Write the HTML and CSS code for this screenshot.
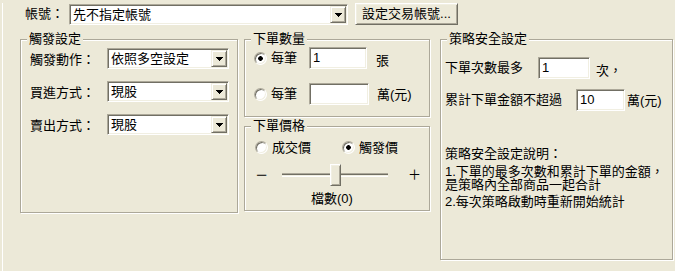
FILE: index.html
```html
<!DOCTYPE html>
<html lang="zh-Hant">
<head>
  <meta charset="UTF-8">
  <meta name="viewport" content="width=device-width, initial-scale=1.0">
  <title>策略設定</title>
  <link rel="stylesheet" href="styles.css">
</head>

<body>
  <div class="dialog">
    <div class="account-row">
      <span class="account-label">帳號：</span>
      <div class="combo combo-account">
        <span class="combo-text">先不指定帳號</span>
        <span class="combo-btn"><svg width="7" height="4" viewBox="0 0 7 4" shape-rendering="crispEdges"><path d="M0 0h7v1h-1v1h-1v1h-1v1h-1v-1h-1v-1h-1v-1h-1z" fill="#000"/></svg></span>
      </div>
      <button class="btn account-btn">設定交易帳號...</button>
    </div>

    <div class="panels">
      <div class="group group-trigger">
        <div class="group-title">觸發設定</div>
        <div class="trigger-body">
          <div class="field-row">
            <span class="field-label">觸發動作：</span>
            <div class="combo combo-field">
              <span class="combo-text">依照多空設定</span>
              <span class="combo-btn"><svg width="7" height="4" viewBox="0 0 7 4" shape-rendering="crispEdges"><path d="M0 0h7v1h-1v1h-1v1h-1v1h-1v-1h-1v-1h-1v-1h-1z" fill="#000"/></svg></span>
            </div>
          </div>
          <div class="field-row">
            <span class="field-label">買進方式：</span>
            <div class="combo combo-field">
              <span class="combo-text">現股</span>
              <span class="combo-btn"><svg width="7" height="4" viewBox="0 0 7 4" shape-rendering="crispEdges"><path d="M0 0h7v1h-1v1h-1v1h-1v1h-1v-1h-1v-1h-1v-1h-1z" fill="#000"/></svg></span>
            </div>
          </div>
          <div class="field-row">
            <span class="field-label">賣出方式：</span>
            <div class="combo combo-field">
              <span class="combo-text">現股</span>
              <span class="combo-btn"><svg width="7" height="4" viewBox="0 0 7 4" shape-rendering="crispEdges"><path d="M0 0h7v1h-1v1h-1v1h-1v1h-1v-1h-1v-1h-1v-1h-1z" fill="#000"/></svg></span>
            </div>
          </div>
        </div>
      </div>

      <div class="middle-col">
        <div class="group group-qty">
          <div class="group-title">下單數量</div>
          <div class="qty-body">
            <div class="qty-row">
              <span class="radio checked"></span>
              <span class="qty-label">每筆</span>
              <input class="textbox qty-lots" type="text" value="1">
              <span class="unit unit-lots">張</span>
            </div>
            <div class="qty-row">
              <span class="radio"></span>
              <span class="qty-label">每筆</span>
              <input class="textbox qty-amount" type="text" value="">
              <span class="unit unit-amount">萬(元)</span>
            </div>
          </div>
        </div>

        <div class="group group-price">
          <div class="group-title">下單價格</div>
          <div class="price-body">
            <div class="price-options">
              <label class="price-option"><span class="radio"></span>成交價</label>
              <label class="price-option"><span class="radio checked"></span>觸發價</label>
            </div>
            <div class="slider-row">
              <span class="slider-sign">─</span>
              <div class="slider-track"><span class="slider-thumb"></span></div>
              <span class="slider-sign slider-plus">＋</span>
            </div>
            <div class="slider-caption">檔數(0)</div>
          </div>
        </div>
      </div>

      <div class="group group-safety">
        <div class="group-title">策略安全設定</div>
        <div class="safety-body">
          <div class="safety-row">
            <span class="safety-label">下單次數最多</span>
            <input class="textbox max-count" type="text" value="1">
            <span class="unit unit-count">次，</span>
          </div>
          <div class="safety-row">
            <span class="safety-label safety-label-wide">累計下單金額不超過</span>
            <input class="textbox max-amount" type="text" value="10">
            <span class="unit unit-max">萬(元)</span>
          </div>
          <p class="notes-title">策略安全設定說明：</p>
          <p class="note">1.下單的最多次數和累計下單的金額，<br>是策略內全部商品一起合計</p>
          <p class="note note-last">2.每次策略啟動時重新開始統計</p>
        </div>
      </div>
    </div>
  </div>
</body>
</html>
```

FILE: styles.css
```css
:root {
  --face: #ece9d8;
  --light: #f1efe2;
  --highlight: #ffffff;
  --shadow: #aca899;
  --dark-shadow: #716f64;
}

* {
  margin: 0;
  padding: 0;
  box-sizing: border-box;
}

body {
  width: 675px;
  height: 271px;
  overflow: hidden;
  background-color: var(--face);
  color: #000;
  font-family: "Liberation Sans", "Noto Sans CJK TC", sans-serif;
  font-size: 13px;
  line-height: 14px;
}

.dialog {
  height: 271px;
  margin-left: 2px;
  border-left: 1px solid var(--highlight);
}

/* top account row */
.account-row {
  display: flex;
  align-items: center;
  height: 22px;
  margin-top: 3px;
  padding-left: 22px;
}

.account-label {
  width: 44px;
}

.combo {
  display: flex;
  align-items: center;
  height: 21px;
  padding: 1px;
  background: #fff;
  border: 1px solid;
  border-color: var(--shadow) var(--highlight) var(--highlight) var(--shadow);
  box-shadow: inset 1px 1px 0 var(--dark-shadow), inset -1px -1px 0 var(--light);
}

.combo-account {
  width: 279px;
  align-self: flex-end;
}

.combo-text {
  flex: 1;
  padding-left: 2px;
  white-space: nowrap;
}

.combo-btn {
  display: flex;
  align-items: center;
  justify-content: center;
  width: 16px;
  height: 17px;
  background: var(--face);
  border: 1px solid;
  border-color: var(--light) var(--dark-shadow) var(--dark-shadow) var(--light);
  box-shadow: inset 1px 1px 0 var(--highlight), inset -1px -1px 0 var(--shadow);
}

.btn {
  height: 22px;
  background: var(--face);
  color: #000;
  font: inherit;
  border: 1px solid;
  border-color: var(--highlight) var(--dark-shadow) var(--dark-shadow) var(--highlight);
  box-shadow: inset 1px 1px 0 var(--light), inset -1px -1px 0 var(--shadow);
}

.account-btn {
  width: 103px;
  margin-left: 7px;
}

/* group boxes */
.panels {
  display: flex;
  align-items: flex-start;
  margin-top: 14px;
  padding-left: 17px;
}

.group {
  border: 1px solid var(--shadow);
  box-shadow: inset 1px 1px 0 var(--highlight), 1px 1px 0 var(--highlight);
}

.group-title {
  width: max-content;
  margin: -8px 0 0 6px;
  padding: 0 2px;
  background: var(--face);
  line-height: 14px;
}

.group-trigger {
  width: 218px;
  height: 174px;
  margin-right: 6px;
}

.trigger-body {
  display: flex;
  flex-direction: column;
  gap: 12px;
  padding: 2px 0 0 9px;
}

.field-row {
  display: flex;
  align-items: center;
  height: 21px;
}

.field-label {
  width: 77px;
  padding-top: 3px;
}

.combo-field {
  width: 122px;
}

.middle-col {
  display: flex;
  flex-direction: column;
  gap: 9px;
  width: 186px;
  margin-right: 10px;
}

.group-qty {
  height: 78px;
}

.qty-body {
  display: flex;
  flex-direction: column;
  gap: 14px;
  padding: 1px 0 0 9px;
}

.qty-row {
  display: flex;
  align-items: center;
  height: 22px;
}

.radio {
  flex: none;
  width: 13px;
  height: 13px;
  margin-right: 4px;
  border-radius: 50%;
  border: 1px solid;
  border-color: var(--shadow) var(--highlight) var(--highlight) var(--shadow);
  background: #fff;
  box-shadow: inset 1px 1px 0 var(--dark-shadow), inset -1px -1px 0 var(--light);
}

.radio.checked {
  background: radial-gradient(circle, #000 0 2px, #fff 2.6px);
}

.qty-label {
  width: 38px;
}

.textbox {
  height: 22px;
  padding: 0 3px 2px;
  background: #fff;
  color: #000;
  font: inherit;
  border: 1px solid;
  border-color: var(--shadow) var(--highlight) var(--highlight) var(--shadow);
  box-shadow: inset 1px 1px 0 var(--dark-shadow), inset -1px -1px 0 var(--light);
  outline: none;
}

.qty-lots {
  width: 58px;
}

.qty-amount {
  width: 60px;
}

.unit {
  margin-top: 5px;
  white-space: nowrap;
}

.unit-lots {
  margin-left: 9px;
}

.unit-amount {
  margin-left: 8px;
  margin-top: 1px;
}

.group-price {
  height: 85px;
}

.price-body {
  padding: 8px 0 0 10px;
}

.price-options {
  display: flex;
  height: 13px;
}

.price-option {
  display: flex;
  align-items: center;
  width: 88px;
  line-height: 13px;
}

.slider-row {
  display: flex;
  align-items: center;
  height: 22px;
  margin-top: 10px;
  padding-left: 2px;
}

.slider-sign {
  width: 12px;
  line-height: 14px;
  overflow: visible;
}

.slider-track {
  display: flex;
  width: 106px;
  height: 22px;
  margin-left: 13px;
  background: linear-gradient(var(--shadow) 0 1px, var(--dark-shadow) 1px 2px, var(--light) 2px 3px, #fff 3px 4px) 0 9px / 100% 4px no-repeat;
}

.slider-thumb {
  width: 11px;
  height: 22px;
  margin-left: 48px;
  background: var(--face);
  border: 1px solid;
  border-color: var(--highlight) var(--dark-shadow) var(--dark-shadow) var(--highlight);
  box-shadow: inset 1px 1px 0 var(--light), inset -1px -1px 0 var(--shadow);
}

.slider-plus {
  margin-left: 20px;
}

.slider-caption {
  margin-top: 6px;
  padding-left: 56px;
}

/* safety settings */
.group-safety {
  width: 233px;
  height: 221px;
}

.safety-body {
  padding: 11px 0 0 4px;
}

.safety-row {
  display: flex;
  align-items: center;
  height: 22px;
}

.safety-row + .safety-row {
  margin-top: 10px;
}

.safety-label {
  width: 93px;
}

.safety-label-wide {
  width: 131px;
}

.max-count {
  width: 52px;
}

.unit-count {
  margin-left: 6px;
}

.max-amount {
  width: 49px;
}

.unit-max {
  margin-left: 2px;
  margin-top: 1px;
}

.notes-title {
  margin-top: 36px;
  line-height: 13px;
}

.note {
  margin-top: 5px;
  line-height: 13px;
}

.note-last {
  margin-top: 4px;
}
```
